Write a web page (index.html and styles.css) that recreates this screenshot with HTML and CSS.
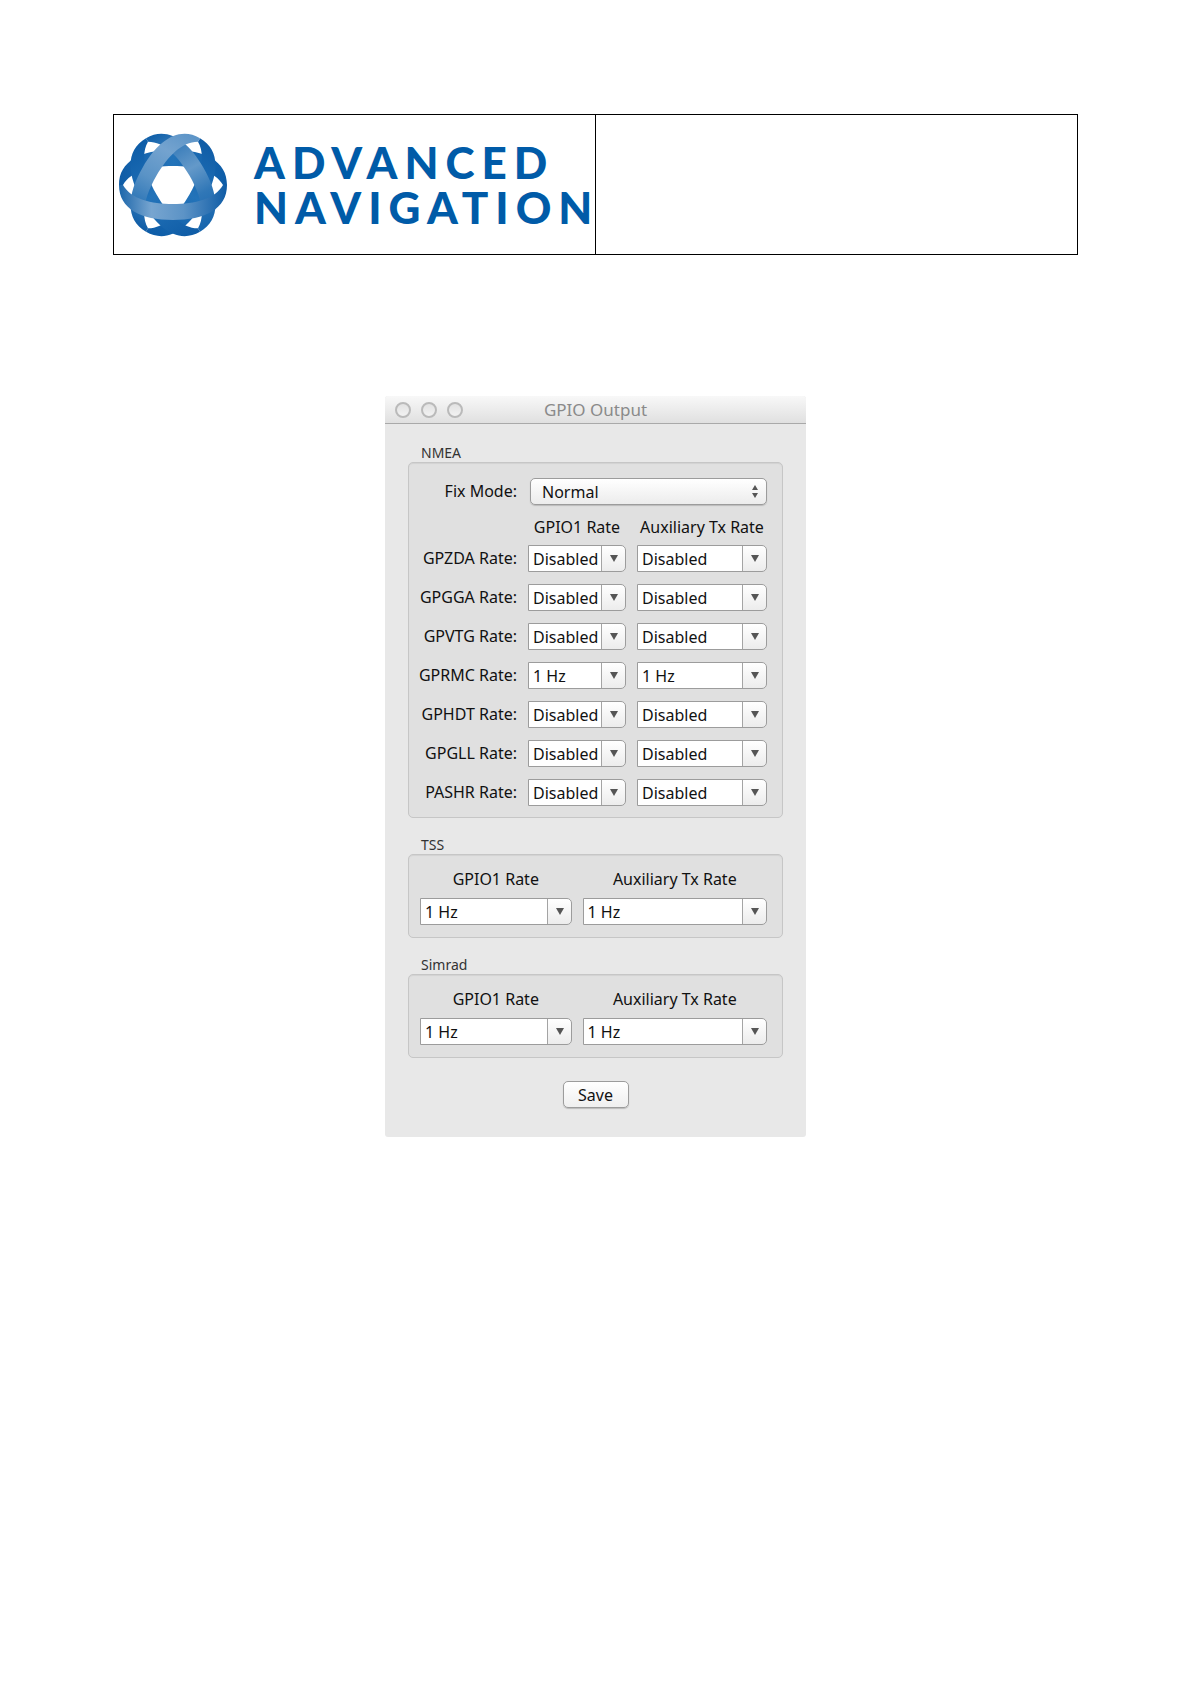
FILE: index.html
```html
<!DOCTYPE html>
<html lang="en">
<head>
<meta charset="utf-8">
<meta name="viewport" content="width=device-width, initial-scale=1">
<title>GPIO Output</title>
<link rel="stylesheet" href="styles.css">
</head>
<body>
<div class="page">
  <header class="masthead">
    <div class="brand">
      <svg class="brand-mark" viewBox="-54 -54 108 108" aria-hidden="true">
        <defs>
          <linearGradient id="gA" x1="0" x2="1"><stop offset="0" stop-color="#1c66aa"/><stop offset=".3" stop-color="#77a5d0"/><stop offset=".6" stop-color="#5c93c6"/><stop offset="1" stop-color="#0f5ca6"/></linearGradient>
          <linearGradient id="gB" x1="0" x2="1"><stop offset="0" stop-color="#5c94c7"/><stop offset=".25" stop-color="#74a3cf"/><stop offset=".55" stop-color="#5a93c6"/><stop offset=".8" stop-color="#2f77b7"/><stop offset="1" stop-color="#0f5ca6"/></linearGradient>
          <linearGradient id="gC" x1="0" x2="1"><stop offset="0" stop-color="#1665ad"/><stop offset=".3" stop-color="#3077b7"/><stop offset=".55" stop-color="#6499c9"/><stop offset=".8" stop-color="#3a7dba"/><stop offset="1" stop-color="#0f5fa9"/></linearGradient>
          <linearGradient id="gD" x1="0" x2="1"><stop offset="0" stop-color="#0d5ca7"/><stop offset=".5" stop-color="#2373b9"/><stop offset="1" stop-color="#0f5ca6"/></linearGradient>
          <path id="half" d="M-54 0C-54 24 -32 35 0 35S54 24 54 0L50 0C42 14 22 19 0 19S-42 14 -50 0Z"/>
        </defs>
        <use href="#half" transform="rotate(180)" fill="url(#gD)"/>
        <use href="#half" transform="rotate(300)" fill="url(#gD)"/>
        <use href="#half" transform="rotate(60)" fill="url(#gD)"/>
        <use href="#half" transform="rotate(240)" fill="url(#gC)"/>
        <use href="#half" transform="rotate(120)" fill="url(#gB)"/>
        <use href="#half" fill="url(#gA)"/>
      </svg>
      <div class="brand-name">ADVANCED<br>NAVIGATION</div>
    </div>
    <div class="masthead-blank"></div>
  </header>

  <main class="dialog">
    <div class="titlebar">
      <div class="lights"><button type="button" aria-label="Close"></button><button type="button" aria-label="Minimize"></button><button type="button" aria-label="Zoom"></button></div>
      <h1 class="title">GPIO Output</h1>
    </div>
    <form class="body">
      <fieldset class="group">
        <legend>NMEA</legend>
        <div class="frame nmea">
          <label class="name" for="fix">Fix Mode:</label>
          <span class="popup"><select id="fix"><option>Normal</option></select></span>
          <span class="head head-first">GPIO1 Rate</span><span class="head">Auxiliary Tx Rate</span>

          <label class="name" for="zda">GPZDA Rate:</label>
          <span class="combo"><select id="zda"><option>Disabled</option></select></span>
          <span class="combo"><select aria-label="GPZDA auxiliary rate"><option>Disabled</option></select></span>

          <label class="name" for="gga">GPGGA Rate:</label>
          <span class="combo"><select id="gga"><option>Disabled</option></select></span>
          <span class="combo"><select aria-label="GPGGA auxiliary rate"><option>Disabled</option></select></span>

          <label class="name" for="vtg">GPVTG Rate:</label>
          <span class="combo"><select id="vtg"><option>Disabled</option></select></span>
          <span class="combo"><select aria-label="GPVTG auxiliary rate"><option>Disabled</option></select></span>

          <label class="name" for="rmc">GPRMC Rate:</label>
          <span class="combo"><select id="rmc"><option>1 Hz</option></select></span>
          <span class="combo"><select aria-label="GPRMC auxiliary rate"><option>1 Hz</option></select></span>

          <label class="name" for="hdt">GPHDT Rate:</label>
          <span class="combo"><select id="hdt"><option>Disabled</option></select></span>
          <span class="combo"><select aria-label="GPHDT auxiliary rate"><option>Disabled</option></select></span>

          <label class="name" for="gll">GPGLL Rate:</label>
          <span class="combo"><select id="gll"><option>Disabled</option></select></span>
          <span class="combo"><select aria-label="GPGLL auxiliary rate"><option>Disabled</option></select></span>

          <label class="name" for="pashr">PASHR Rate:</label>
          <span class="combo"><select id="pashr"><option>Disabled</option></select></span>
          <span class="combo"><select aria-label="PASHR auxiliary rate"><option>Disabled</option></select></span>
        </div>
      </fieldset>

      <fieldset class="group">
        <legend>TSS</legend>
        <div class="frame pair">
          <label for="tss1">GPIO1 Rate</label>
          <label for="tss2">Auxiliary Tx Rate</label>
          <span class="combo"><select id="tss1"><option>1 Hz</option></select></span>
          <span class="combo"><select id="tss2"><option>1 Hz</option></select></span>
        </div>
      </fieldset>

      <fieldset class="group">
        <legend>Simrad</legend>
        <div class="frame pair">
          <label for="sim1">GPIO1 Rate</label>
          <label for="sim2">Auxiliary Tx Rate</label>
          <span class="combo"><select id="sim1"><option>1 Hz</option></select></span>
          <span class="combo"><select id="sim2"><option>1 Hz</option></select></span>
        </div>
      </fieldset>

      <button class="save" type="button">Save</button>
    </form>
  </main>
</div>
</body>
</html>
```
FILE: styles.css
```css
* { box-sizing: border-box; }

body {
  margin: 0;
  background: #fff;
  color: #111;
  font: 16px/20px "Noto Sans", "Open Sans", sans-serif;
}

.page { padding: 114px 113px; }

/* Masthead */
.masthead {
  display: grid;
  grid-template-columns: 1fr 1fr;
  min-height: 141px;
  border: 1px solid #000;
}
.brand {
  display: flex;
  align-items: center;
  gap: 27px;
  min-width: 0;
  padding-left: 5px;
}
.brand-mark { flex: none; width: 108px; height: 108px; }
.brand-name {
  color: #005ba8;
  font: 900 44px/45px Lato, sans-serif;
  letter-spacing: 7px;
  white-space: nowrap;
}
.masthead-blank { margin-left: -1px; border-left: 1px solid #000; }

/* Dialog window */
.dialog {
  max-width: 421px;
  margin: 141px auto 0;
  background: #e8e8e8;
  border-radius: 3px;
}
.titlebar {
  display: grid;
  grid-template-columns: 1fr auto 1fr;
  align-items: center;
  padding: 0 10px;
  border-bottom: 1px solid #a9a9a9;
  border-radius: 3px 3px 0 0;
  background: linear-gradient(#f8f8f8, #e0e0e0);
}
.lights { display: flex; gap: 10px; }
.lights button {
  width: 16px;
  height: 16px;
  padding: 0;
  border: 2px solid #bababa;
  border-radius: 50%;
  background: linear-gradient(#e2e2e2, #f2f2f2);
}
.title {
  margin: 0;
  color: #8a8a8a;
  font-size: 17px;
  font-weight: 400;
  line-height: 27px;
}
.body { padding: 20px 23px 29px; }

.group { min-width: 0; margin: 0 0 18px; padding: 0; border: 0; }
.group legend {
  padding: 0 13px;
  color: #333;
  font-size: 14px;
  line-height: 18px;
}
.frame {
  display: grid;
  border: 1px solid #c6c6c6;
  border-radius: 5px;
  background: #e0e0e0;
  box-shadow: inset 0 1px 1px #d2d2d2;
}
.nmea {
  grid-template-columns: 1fr 98px 130px;
  gap: 12px 11px;
  padding: 15px 15px 11px 0;
}
.name { text-align: right; line-height: 27px; white-space: nowrap; }
.head { height: 16px; text-align: center; white-space: nowrap; }
.head-first { grid-column: 2; }
.pair {
  grid-template-columns: 152fr 185fr;
  gap: 9px 11px;
  padding: 14px 15px 12px 11px;
  text-align: center;
}

/* Drop-downs */
.combo, .popup { position: relative; display: block; }
.popup { grid-column: 2 / 4; padding-left: 2px; }
select {
  display: block;
  appearance: none;
  width: 100%;
  height: 27px;
  margin: 0;
  padding: 0 24px 0 4px;
  border: 1px solid #9c9c9c;
  color: #111;
  font: inherit;
}
.combo select {
  border-radius: 0 5px 5px 0;
  background:
    linear-gradient(#fff, #ececec) right / 23px 100% no-repeat,
    linear-gradient(#a4a4a4, #a4a4a4) right 23px top / 1px 100% no-repeat,
    #fff;
}
.combo::after {
  content: "";
  position: absolute;
  top: 10px;
  right: 8px;
  border: solid transparent;
  border-width: 7px 4px 0;
  border-top-color: #555;
  pointer-events: none;
}
.popup select {
  padding-left: 11px;
  border-radius: 5px;
  background: linear-gradient(#fff, #ececec);
  box-shadow: 0 1px 1px #bbb;
}
.popup::before, .popup::after {
  content: "";
  position: absolute;
  right: 9px;
  border: solid transparent;
  pointer-events: none;
}
.popup::before { top: 7px; border-width: 0 3px 5px; border-bottom-color: #555; }
.popup::after { top: 15px; border-width: 5px 3px 0; border-top-color: #555; }

.save {
  display: block;
  width: 66px;
  height: 27px;
  margin: 23px auto 0;
  padding: 0;
  border: 1px solid #9c9c9c;
  border-radius: 5px;
  background: linear-gradient(#fff, #efefef);
  box-shadow: 0 1px 1px #bbb;
  color: #111;
  font: inherit;
}
```
